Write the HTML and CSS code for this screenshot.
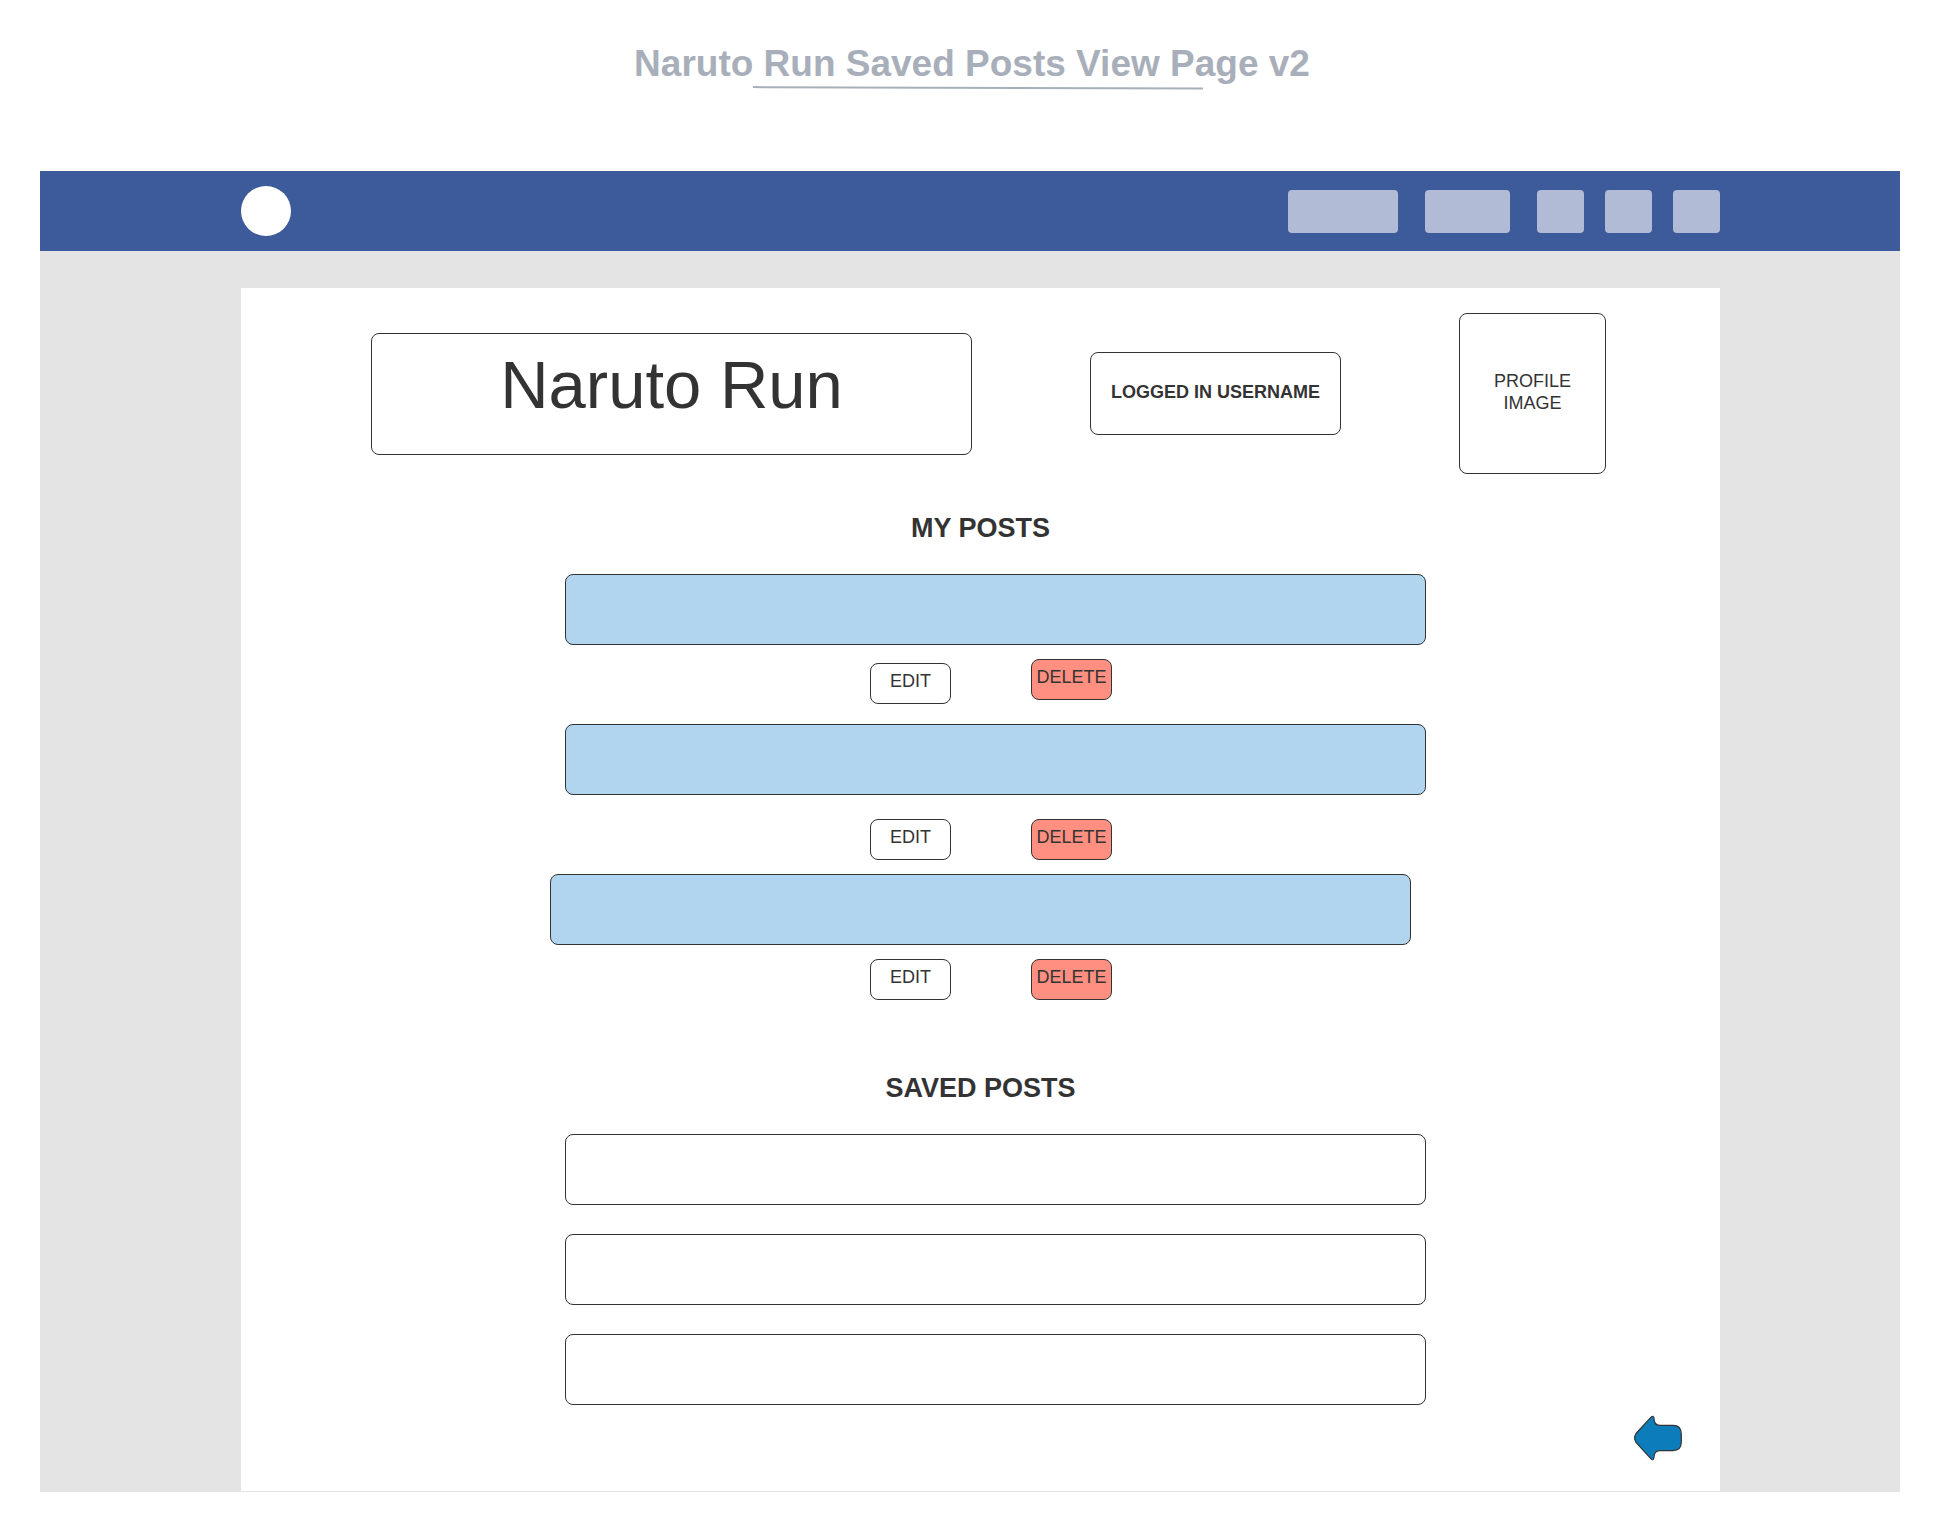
FILE: index.html
```html
<!DOCTYPE html>
<html lang="en">
<head>
<meta charset="utf-8">
<meta name="viewport" content="width=device-width, initial-scale=1">
<title>Naruto Run Saved Posts View Page v2</title>
<link rel="stylesheet" href="styles.css">
</head>
<body>
<header class="doc-header">
  <h1 class="doc-title">Naruto Run Saved Posts View Page v2</h1>
  <svg class="doc-rule" width="450" height="4" viewBox="0 0 450 4" aria-hidden="true"><path d="M0 1.1L450 2.5" stroke="#a8afba" stroke-width="2"/></svg>
</header>
<div class="frame">
  <nav class="topbar" aria-label="Main">
    <a class="logo" href="#" aria-label="Home"></a>
    <div class="topbar-links">
      <button class="chip chip-wide" type="button" aria-label="Search"></button>
      <button class="chip chip-medium" type="button" aria-label="Profile"></button>
      <div class="chip-group">
        <button class="chip" type="button" aria-label="Friends"></button>
        <button class="chip" type="button" aria-label="Messages"></button>
        <button class="chip" type="button" aria-label="Settings"></button>
      </div>
    </div>
  </nav>
  <div class="backdrop">
    <main class="panel">
      <section class="identity">
        <div class="box site-name">Naruto Run</div>
        <div class="box username">LOGGED IN USERNAME</div>
        <div class="box avatar">PROFILE<br>IMAGE</div>
      </section>

      <section class="posts">
        <h2 class="heading">MY POSTS</h2>
        <article class="box bar own"></article>
        <div class="actions staggered">
          <button class="box action" type="button">EDIT</button>
          <button class="box action delete" type="button">DELETE</button>
        </div>
        <article class="box bar own"></article>
        <div class="actions spaced">
          <button class="box action" type="button">EDIT</button>
          <button class="box action delete" type="button">DELETE</button>
        </div>
        <article class="box bar own centered"></article>
        <div class="actions">
          <button class="box action" type="button">EDIT</button>
          <button class="box action delete" type="button">DELETE</button>
        </div>
      </section>

      <section class="posts saved">
        <h2 class="heading">SAVED POSTS</h2>
        <div class="saved-list">
          <article class="box bar"></article>
          <article class="box bar"></article>
          <article class="box bar"></article>
        </div>
      </section>

      <a class="back" href="#" aria-label="Back">
        <svg width="48" height="46" viewBox="0 0 48 46" aria-hidden="true"><path d="M2 18.500L16.800 2.400Q19.400 -.2 20 3C20 8 21.500 10.300 26 10.300H39Q47.300 10.300 47.300 19V27Q47.300 35.600 39 35.600H26C21.500 35.600 20 38 20 42.500Q19.400 46.300 16.800 43.700L2 27.500Q-.7 23 2 18.500Z" fill="#0c7cba" stroke="#333" stroke-width="1.200"/></svg>
      </a>
    </main>
  </div>
</div>
</body>
</html>
```
FILE: styles.css
```css
* {
  box-sizing: border-box;
}

body {
  margin: 0;
  padding: 0 40px 40px;
  background: #fff;
  color: #333;
  font: 18px/22px "Liberation Sans", Arial, sans-serif;
}

.doc-header {
  display: flex;
  flex-direction: column;
  align-items: center;
  padding: 42px 0 81px 4px;
}

.doc-title {
  margin: 0;
  color: #a8afba;
  font-size: 37px;
  line-height: 44px;
}

.doc-rule {
  display: block;
  margin-left: 12px;
}

.topbar {
  display: flex;
  align-items: center;
  justify-content: space-between;
  height: 80px;
  padding: 0 180px 0 201px;
  background: #3d5a9b;
}

.logo {
  width: 50px;
  height: 50px;
  border-radius: 50%;
  background: #fff;
}

.topbar-links {
  display: flex;
  gap: 27px;
}

.chip-group {
  display: flex;
  gap: 21px;
}

.chip {
  width: 47px;
  height: 43px;
  padding: 0;
  border: 0;
  border-radius: 4px;
  background: #b1bbd6;
}

.chip-medium {
  width: 85px;
}

.chip-wide {
  width: 110px;
}

.backdrop {
  padding: 37px 180px 1px 201px;
  background: #e4e4e4;
}

.panel {
  display: flex;
  flex-direction: column;
  padding: 25px 0 30px;
  background: #fff;
}

.box {
  border: 1px solid #333;
  border-radius: 8px;
  background: #fff;
}

.identity {
  display: flex;
  align-items: center;
  justify-content: space-between;
  padding: 0 114px 0 130px;
}

.site-name {
  width: 601px;
  padding: 11px 0 29px;
  font-size: 67px;
  line-height: 80px;
  text-align: center;
}

.username {
  width: 251px;
  padding: 28px 0 31px;
  font-weight: bold;
  text-align: center;
}

.avatar {
  width: 147px;
  padding: 56px 0 59px;
  text-align: center;
}

.posts {
  display: flex;
  flex-direction: column;
  align-items: center;
  padding-top: 38px;
}

.saved {
  padding-top: 72px;
}

.heading {
  margin: 0 0 30px;
  font-size: 27px;
  line-height: 32px;
}

.bar {
  width: 861px;
  height: 71px;
  margin-left: 30px;
}

.own {
  background: #b1d5ef;
}

.centered {
  margin-left: 0;
}

.actions {
  display: flex;
  gap: 80px;
  padding: 14px 0 0 21px;
}

.staggered {
  height: 79px;
  padding-bottom: 20px;
  align-items: flex-end;
}

.staggered .delete {
  align-self: flex-start;
}

.spaced {
  padding: 24px 0 14px 21px;
}

.action {
  width: 81px;
  padding: 6px 0 11px;
  color: inherit;
  font: inherit;
  text-align: center;
}

.delete {
  background: #ff8f80;
}

.saved-list {
  display: flex;
  flex-direction: column;
  gap: 29px;
}

.back {
  align-self: flex-end;
  margin: 10px 38px 0 0;
}

.back svg {
  display: block;
}
```
